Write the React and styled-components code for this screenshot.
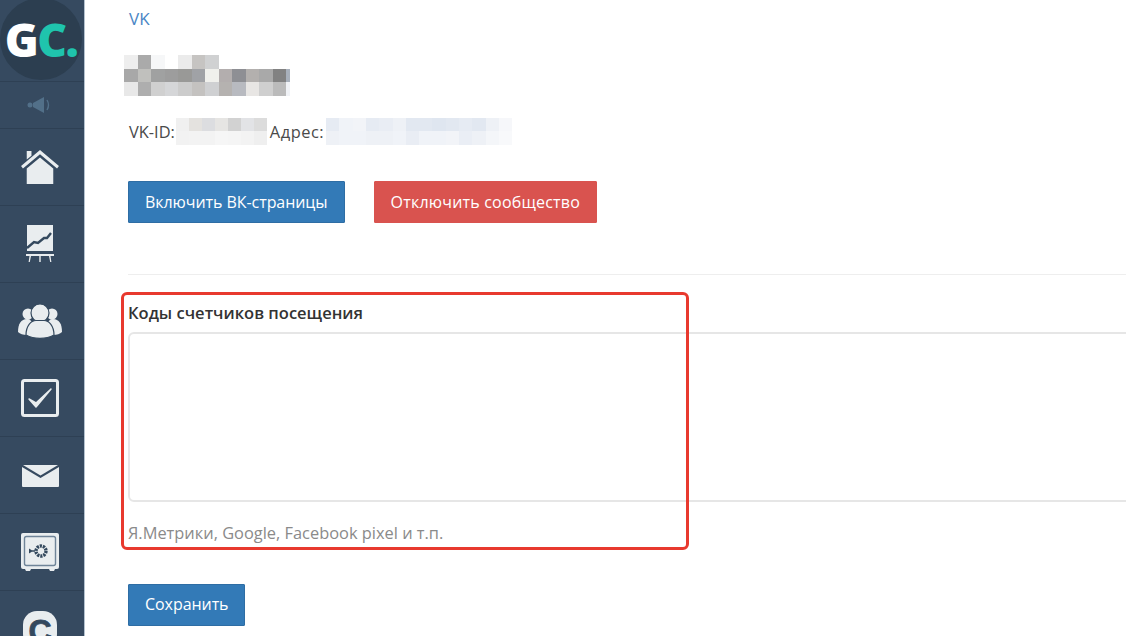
import React from 'react'
import styled, { createGlobalStyle } from 'styled-components'

const GlobalStyle = createGlobalStyle`
  html, body {
    margin: 0;
    padding: 0;
    height: 636px;
    overflow: hidden;
    background: #fff;
  }
`

const Page = styled.div`
  position: relative;
  display: flex;
  width: 1126px;
  height: 636px;
  overflow: hidden;
  font-family: "Open Sans", "Liberation Sans", sans-serif;
  font-size: 16px;
  color: #4a4a4a;
`

const Sidebar = styled.nav`
  flex: 0 0 84px;
  height: 636px;
  overflow: hidden;
  background: #364a60;
  border-right: 1px solid #b4c2cf;
`

const LogoRow = styled.div`
  height: 81px;
  padding-right: 2px;
  display: flex;
  justify-content: center;
  align-items: flex-end;
  overflow: hidden;
  border-bottom: 1px solid #2e4054;
`

const LogoCircle = styled.div`
  flex: 0 0 82px;
  width: 82px;
  height: 82px;
  margin-bottom: 1px;
  border-radius: 50%;
  background: #2c3e50;
  display: flex;
  justify-content: center;
  align-items: center;
  font-family: "Open Sans", sans-serif;
  font-weight: 800;
  font-size: 46px;
  letter-spacing: -1.6px;
  color: #fff;

  span {
    color: #1fc4ad;
  }
`

const NavItem = styled.div`
  box-sizing: border-box;
  height: ${(p) => (p.$small ? '47px' : '77px')};
  padding: ${(p) => p.$shift || 0}px 4px 0 0;
  display: flex;
  justify-content: center;
  align-items: center;
  border-bottom: 1px solid #2e4054;
`

const LetterIcon = styled.div`
  flex: 0 0 34px;
  width: 34px;
  height: 34px;
  padding-top: 3px;
  border-radius: 14px;
  background: #e9edef;
  color: #34495e;
  font-family: "Liberation Sans", sans-serif;
  font-weight: 700;
  font-size: 32px;
  line-height: 34px;
  text-align: center;
  -webkit-text-stroke: 0.8px #34495e;
`

const Main = styled.main`
  flex: 1;
  min-width: 0;
  padding: 9px 0 0 43px;
`

const VkLink = styled.a`
  display: block;
  height: 20px;
  padding-left: 1px;
  line-height: 20px;
  font-size: 17px;
  color: #4a86c5;
`

const BlurGrid = styled.div`
  display: grid;
  grid-template-columns: ${(p) => p.$columns};
  grid-auto-rows: 13.5px;
  flex: 0 0 auto;
`

const NameBlur = styled(BlurGrid)`
  margin: 26px 0 0 -4px;
`

const Cell = styled.i`
  display: block;
  background: ${(p) => p.$c};
`

const IdRow = styled.div`
  display: flex;
  align-items: center;
  height: 27px;
  margin-top: 22px;
  font-size: 16.4px;
`

const IdLabel = styled.span`
  white-space: nowrap;
  margin: ${(p) => p.$gap || '0'};
  letter-spacing: ${(p) => p.$spacing || 0};
`

const Buttons = styled.div`
  display: flex;
  gap: 29px;
  margin-top: 36px;
`

const Button = styled.button`
  height: 42px;
  padding: 0 16px;
  border: 1px solid ${(p) => (p.$danger ? '#d9534f' : '#2e6da4')};
  border-radius: 1px;
  background: ${(p) => (p.$danger ? '#d9534f' : '#337ab7')};
  color: #fff;
  font-family: inherit;
  font-size: 16px;
  letter-spacing: ${(p) => (p.$danger ? '0.2px' : '-0.06px')};
  white-space: nowrap;
`

const SaveButton = styled(Button)`
  padding-bottom: 2px;
`

const Divider = styled.hr`
  height: 1px;
  margin: 51px 0 0;
  border: 0;
  background: #eee;
`

const FieldLabel = styled.label`
  display: block;
  margin-top: 27px;
  height: 22px;
  line-height: 22px;
  font-size: 16.5px;
  font-weight: 600;
  color: #333;
`

const CodeArea = styled.textarea`
  display: block;
  box-sizing: border-box;
  width: 1040px;
  height: 170px;
  margin-top: 8px;
  border: 2px solid #e6e6e6;
  border-radius: 6px;
  background: #fff;
  resize: none;
  outline: none;
`

const Hint = styled.div`
  height: 22px;
  line-height: 22px;
  margin-top: 20px;
  font-size: 16.4px;
  color: #8a8a8a;
`

const SaveRow = styled.div`
  margin-top: 40px;
`

const Highlight = styled.div`
  position: absolute;
  left: 121px;
  top: 292px;
  width: 568px;
  height: 258px;
  box-sizing: border-box;
  border: 3px solid #e8392e;
  border-radius: 6px;
  pointer-events: none;
`

const ink = '#e9edef'
const navy = '#34495e'

const SpeakerIcon = () => (
  <svg width="26" height="18" viewBox="0 0 26 18" fill="#527089">
    <circle cx="3" cy="9" r="2.5" />
    <path d="M6 7 L17 1 V17 L6 11 Z" />
    <path d="M20 4 Q23 9 20 14" fill="none" stroke="#527089" strokeWidth="1.4" />
  </svg>
)

const HomeIcon = () => (
  <svg width="40" height="36" viewBox="0 0 42 38" fill={ink}>
    <path d="M7 2 H12 V7 L7 11 Z" />
    <path d="M21 1 L41 18 L39 20.5 L21 5.5 L3 20.5 L1 18 Z" />
    <path d="M21 9 L35 20.5 V37 H7 V20.5 Z" />
  </svg>
)

const ChartIcon = () => (
  <svg width="28" height="38" viewBox="0 0 28 38" fill={ink}>
    <path d="M1 0 H27 V26 H1 Z" />
    <path d="M0 29 H28 V31 H0 Z" />
    <path d="M3.5 31 H5 L3.8 37 H2.6 Z M13.3 31 H14.7 V37 H13.3 Z M23 31 H24.5 L25.4 37 H24.2 Z" />
    <path d="M1 23 L8 17 L12 18 L18 13 L21 13 L25 8" fill="none" stroke={navy} strokeWidth="2.4" />
  </svg>
)

const UsersIcon = () => (
  <svg width="44" height="35" viewBox="0 0 44 35" fill={ink}>
    <circle cx="10" cy="10" r="5.5" />
    <circle cx="34" cy="10" r="5.5" />
    <path d="M0 28 C0 20 3 15 9 15 C12 15 14 17 14 20 L9 31 C5 31 2 30 0 28 Z" />
    <path d="M44 28 C44 20 41 15 35 15 C32 15 30 17 30 20 L35 31 C39 31 42 30 44 28 Z" />
    <circle cx="22" cy="9" r="9" stroke={navy} strokeWidth="1.2" />
    <path d="M8 31 C8 22 13 16.5 18 16.5 H26 C31 16.5 36 22 36 31 C28 35.5 16 35.5 8 31 Z" stroke={navy} strokeWidth="1.2" />
  </svg>
)

const CheckIcon = () => (
  <svg width="38" height="38" viewBox="0 0 38 38" fill="none">
    <rect x="1.5" y="1.5" width="35" height="35" rx="2" stroke={ink} strokeWidth="3" />
    <path d="M8 20 L15 28 L30 10 L15 24 Z" fill={ink} stroke={ink} strokeWidth="1.5" strokeLinejoin="round" />
  </svg>
)

const MailIcon = () => (
  <svg width="37" height="22" viewBox="0 0 37 22" fill={ink}>
    <path d="M1 0 L18.5 10.5 L36 0 Z" />
    <path d="M0 2 L18.5 13 L37 2 V21 Q37 22 36 22 H1 Q0 22 0 21 Z" />
  </svg>
)

const SafeIcon = () => (
  <svg width="38" height="38" viewBox="0 0 38 38">
    <rect x="0" y="0" width="38" height="36" rx="2" fill={ink} />
    <path d="M4 36 H10 L9 38 H5 Z M28 36 H34 L33 38 H29 Z" fill={ink} />
    <rect x="3.5" y="3.5" width="31" height="29" rx="2" fill="none" stroke="#6f8498" strokeWidth="1.4" />
    <circle cx="20" cy="18" r="5" fill="none" stroke={navy} strokeWidth="3.4" strokeDasharray="2.2 0.9" />
    <path d="M8 15.5 L12 18 L8 20.5 Z M11 17.2 H14 V18.8 H11 Z" fill={navy} />
  </svg>
)

const nameCells = [
  ['#eeeeee', '#aaaaaa', '#f6f7f8', '#ffffff', '#ebebeb', '#c6c4c2', '#d0d1d2', '#ffffff', '#ffffff', '#ffffff', '#ffffff', '#ffffff', '#ffffff'],
  ['#a8a8a8', '#c0c0bd', '#a0a1a1', '#9d9d9d', '#999997', '#a0a2a6', '#f0f0ec', '#b3aeae', '#8e8f94', '#b3b0ae', '#a9a9a9', '#828282', '#a8b0bb'],
  ['#e8e8e8', '#aeaeae', '#d0d0d0', '#d5d6d8', '#cccccc', '#c4c2c0', '#cfd0d2', '#b5b2b0', '#b8bac0', '#e8e6e4', '#cfcfcf', '#bbbbbb', '#f0f2f6'],
]

const idCells = [
  ['#f0f0f0', '#e4e2df', '#dcdde0', '#e6e5e3', '#d2d2d2', '#e2e3e6', '#dcdcdc'],
  ['#f2f2f2', '#f3f3f3', '#f3f3f3', '#f6f6f6', '#f5f5f5', '#f3f3f3', '#efefef'],
]

const addressCells = [
  ['#e6ebf3', '#f0f3f8', '#f2f4f8', '#e6ebf3', '#e9edf4', '#eef1f6', '#e2e8f1', '#e2e8f1', '#dfe6f0', '#e2e8f1', '#e6ebf3', '#e2e8f1', '#eef1f6', '#f6f7fa'],
  ['#eef1f6', '#f0f3f8', '#f0f3f8', '#eef1f6', '#eef1f6', '#f0f3f8', '#e9edf4', '#f0f3f8', '#f0f3f8', '#f2f4f8', '#eaeef5', '#eef1f6', '#f4f6f9', '#f8f9fb'],
]

const Blur = ({ as: Grid = BlurGrid, rows, columns }) => (
  <Grid $columns={columns}>
    {rows.flat().map((c, i) => <Cell key={i} $c={c} />)}
  </Grid>
)

const App = () => {
  return (
    <Page>
      <GlobalStyle />
      <Sidebar>
        <LogoRow>
          <LogoCircle>G<span>C.</span></LogoCircle>
        </LogoRow>
        <NavItem $small><SpeakerIcon /></NavItem>
        <NavItem><HomeIcon /></NavItem>
        <NavItem><ChartIcon /></NavItem>
        <NavItem><UsersIcon /></NavItem>
        <NavItem><CheckIcon /></NavItem>
        <NavItem $shift={2}><MailIcon /></NavItem>
        <NavItem><SafeIcon /></NavItem>
        <NavItem><LetterIcon>C</LetterIcon></NavItem>
      </Sidebar>
      <Main>
        <VkLink>VK</VkLink>
        <Blur as={NameBlur} rows={nameCells} columns="repeat(12, 13.5px) 4px" />
        <IdRow>
          <IdLabel $gap="0 1px 0 1px">VK-ID:</IdLabel>
          <Blur rows={idCells} columns="repeat(7, 13px)" />
          <IdLabel $gap="0 2px 0 3px" $spacing="0.5px">Адрес:</IdLabel>
          <Blur rows={addressCells} columns="repeat(14, 13.3px)" />
        </IdRow>
        <Buttons>
          <Button>Включить ВК-страницы</Button>
          <Button $danger>Отключить сообщество</Button>
        </Buttons>
        <Divider />
        <FieldLabel>Коды счетчиков посещения</FieldLabel>
        <CodeArea />
        <Hint>Я.Метрики, Google, Facebook pixel и т.п.</Hint>
        <SaveRow>
          <SaveButton>Сохранить</SaveButton>
        </SaveRow>
      </Main>
      <Highlight />
    </Page>
  )
}

export default App
